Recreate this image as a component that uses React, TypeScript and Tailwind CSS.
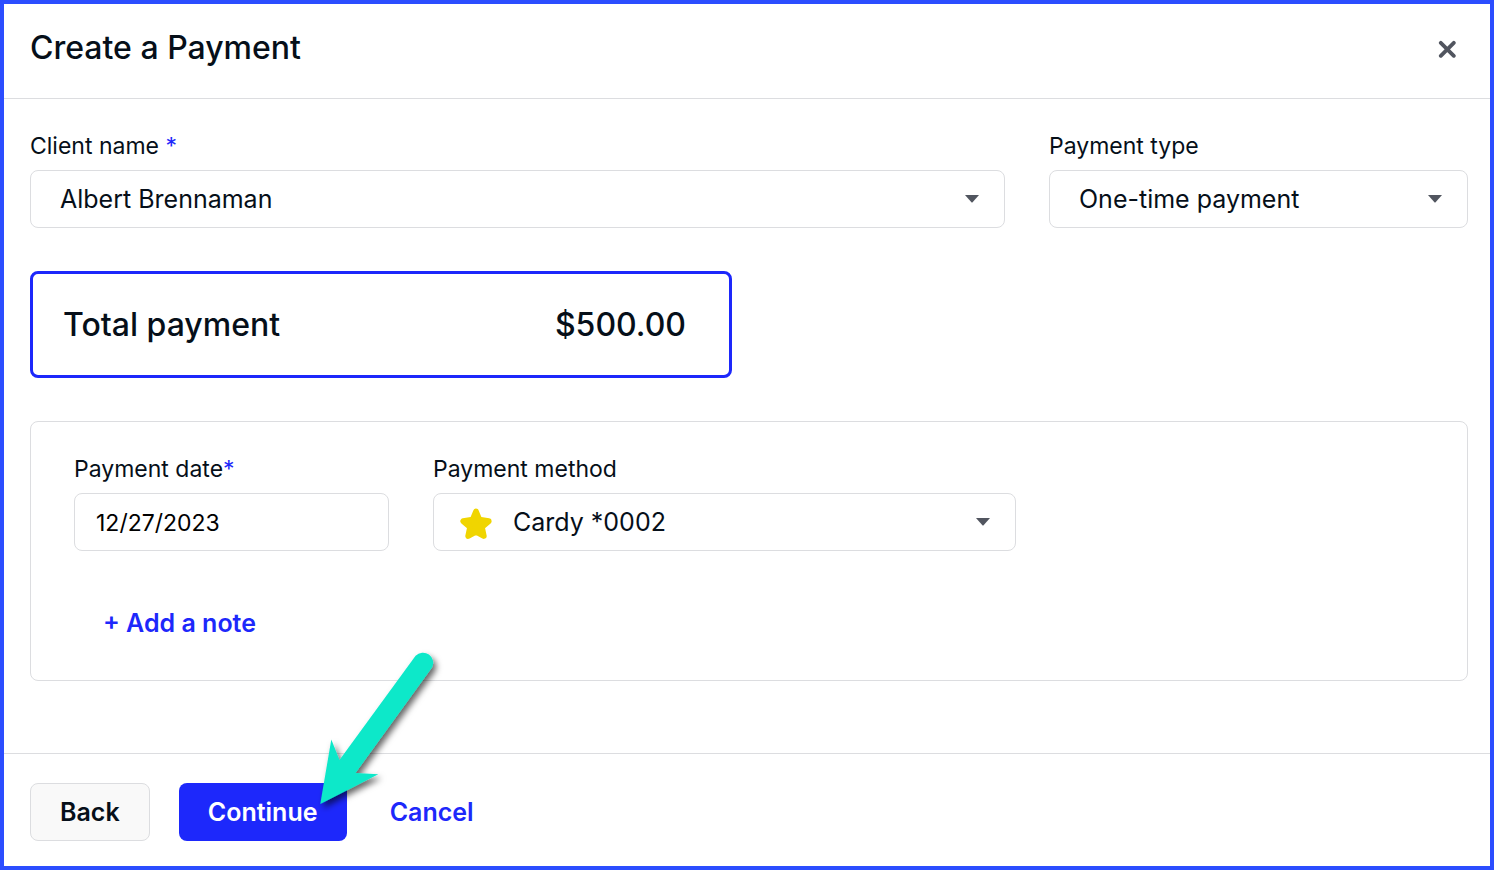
import type { ReactNode } from 'react';

function Caret() {
  return (
    <svg
      aria-hidden="true"
      viewBox="0 0 14 8"
      className="pointer-events-none absolute top-1/2 right-[26px] h-2 w-3.5 -translate-y-1/2 fill-[#51555f]"
    >
      <path d="M0 0h14L7.6 7.2a.9.9 0 0 1-1.2 0z" />
    </svg>
  );
}

function Star() {
  return (
    <svg
      aria-hidden="true"
      viewBox="0 0 32 32"
      className="pointer-events-none absolute top-[15px] left-[27px] size-8 fill-[#f0d500] stroke-[#f0d500]"
    >
      <path
        d="M16 3.5L19.3 11.5L28.7 13.2L21.9 19L23.8 28L16 23.7L8.2 28L10.1 19L3.3 13.2L12.7 11.5Z"
        strokeWidth="5.8"
        strokeLinejoin="round"
      />
    </svg>
  );
}

function Label({ htmlFor, children }: { htmlFor: string; children: ReactNode }) {
  return (
    <label htmlFor={htmlFor} className="block text-[23px] leading-8">
      {children}
    </label>
  );
}

const field =
  'h-[58px] w-full appearance-none rounded-lg border border-[#dcdde0] bg-white pt-0.5 outline-none focus-visible:border-[#1d28fb]';

const button =
  'flex h-[58px] items-center justify-center rounded-lg pt-0.5 text-[25px] font-semibold cursor-pointer';

function Arrow() {
  return (
    <svg
      aria-hidden="true"
      viewBox="310 640 140 180"
      className="pointer-events-none absolute top-[-143px] left-[131px] h-[180px] w-[140px] overflow-visible"
    >
      <defs>
        <filter id="arrow-shadow" x="-20%" y="-20%" width="150%" height="150%">
          <feDropShadow dx="3" dy="4" stdDeviation="3" floodColor="#000" floodOpacity="0.6" />
        </filter>
      </defs>
      <path
        d="M320.3 804L331.3 739.5L339.5 760L415.6 655.8A10.2 10.2 0 0 1 432 667.6L355.5 773L378.3 774.2Z"
        fill="#0de8c9"
        filter="url(#arrow-shadow)"
      />
    </svg>
  );
}

export default function App() {
  return (
    <div className="flex min-h-screen flex-col border-4 border-[#2b4dff] bg-white font-['Inter',sans-serif] text-[#060f19]">
      <header className="flex h-[95px] items-center justify-between border-b border-[#dcdde0] pr-7 pb-1 pl-[26px]">
        <h1 className="pb-0.5 text-[32px] leading-10 font-medium">Create a Payment</h1>
        <button type="button" aria-label="Close" className="flex size-[30px] cursor-pointer items-center justify-center">
          <svg aria-hidden="true" viewBox="0 0 18 18" className="size-[18px] stroke-[#51555f]">
            <path d="M2.8 2.8l13 13M15.8 2.8l-13 13" strokeWidth="3.8" strokeLinecap="round" />
          </svg>
        </button>
      </header>

      <main className="flex flex-1 flex-col pt-[31px] pr-[22px] pb-[72px] pl-[26px]">
        <div className="grid grid-cols-[975fr_419fr] gap-11">
          <div className="flex flex-col gap-2">
            <Label htmlFor="client">
              Client name <span className="text-[#1d28fb]">*</span>
            </Label>
            <div className="relative">
              <select id="client" className={`${field} pr-12 pl-[29px] text-[25px]`}>
                <option>Albert Brennaman</option>
              </select>
              <Caret />
            </div>
          </div>
          <div className="flex flex-col gap-2">
            <Label htmlFor="type">Payment type</Label>
            <div className="relative">
              <select id="type" className={`${field} pr-12 pl-[29px] text-[25px]`}>
                <option>One-time payment</option>
              </select>
              <Caret />
            </div>
          </div>
        </div>

        <div className="mt-[43px] flex h-[107px] w-full max-w-[702px] items-center justify-between rounded-lg border-3 border-[#1d28fb] pr-[43px] pl-[30px] text-[32px] font-medium">
          <span>Total payment</span>
          <span>$500.00</span>
        </div>

        <section className="mt-[43px] flex flex-1 flex-col items-start rounded-lg border border-[#dcdde0] px-[43px] pt-[31px] pb-9">
          <div className="flex w-full gap-11">
            <div className="flex w-[315px] flex-col gap-2">
              <Label htmlFor="date">
                Payment date<span className="text-[#1d28fb]">*</span>
              </Label>
              <input
                id="date"
                type="text"
                defaultValue="12/27/2023"
                className={`${field} px-[21px] text-[23px] text-black`}
              />
            </div>
            <div className="flex w-full max-w-[583px] flex-col gap-2">
              <Label htmlFor="method">Payment method</Label>
              <div className="relative">
                <select id="method" className={`${field} pr-12 pl-[79px] text-[25px]`}>
                  <option>Cardy *0002</option>
                </select>
                <Star />
                <Caret />
              </div>
            </div>
          </div>
          <button
            type="button"
            className="mt-[52px] ml-[29px] cursor-pointer text-[25px] leading-10 font-semibold text-[#1d28fb]"
          >
            + Add a note
          </button>
        </section>
      </main>

      <footer className="flex items-center gap-[29px] border-t border-[#dcdde0] pt-[29px] pb-[25px] pl-[26px]">
        <button type="button" className={`${button} border border-[#dcdde0] bg-[#f9f9f9] px-[29px]`}>
          Back
        </button>
        <div className="relative">
          <button type="button" className={`${button} min-w-[168px] bg-[#1d28fb] px-7 text-white`}>
            Continue
          </button>
          <Arrow />
        </div>
        <button type="button" className={`${button} px-3.5 text-[#1d28fb]`}>
          Cancel
        </button>
      </footer>
    </div>
  );
}
